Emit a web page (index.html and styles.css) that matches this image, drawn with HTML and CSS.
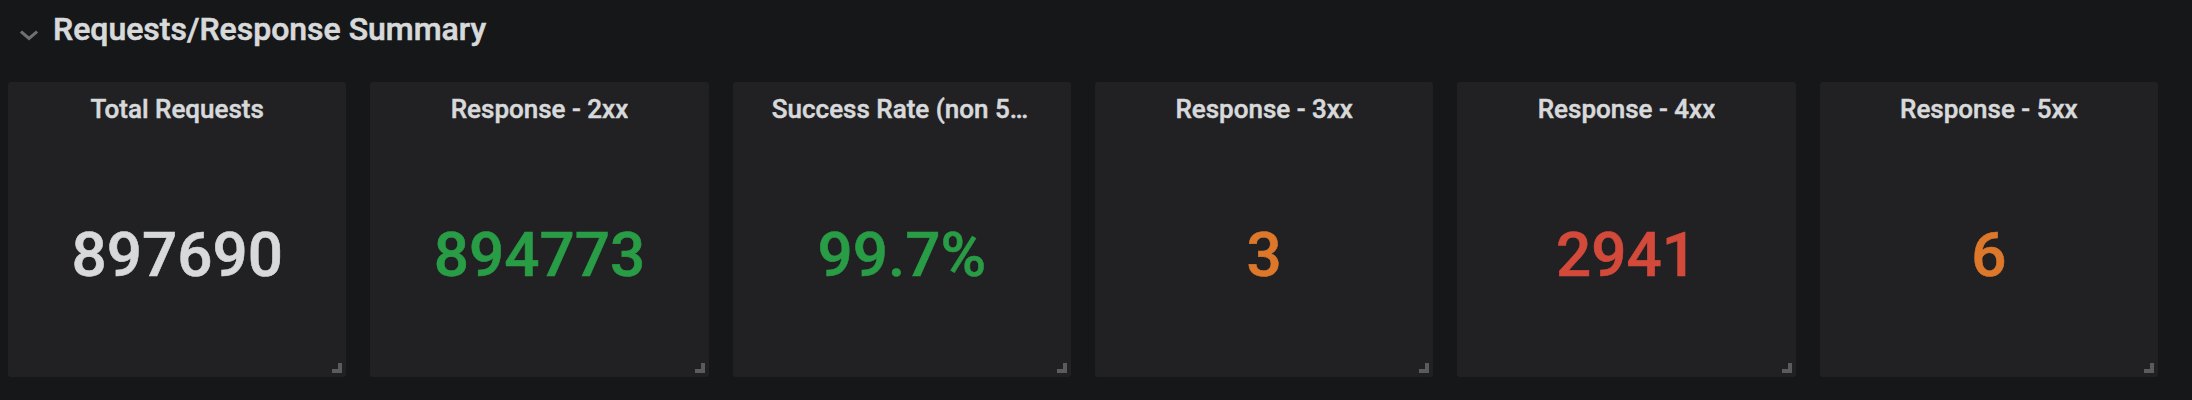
FILE: index.html
```html
<!DOCTYPE html>
<html lang="en">
<head>
<meta charset="utf-8">
<title>Requests/Response Summary</title>
<link rel="stylesheet" href="styles.css">
</head>
<body>
<div class="dashboard">
  <div class="row-header">
    <svg class="chevron" width="18" height="11" viewBox="0 0 18 11" aria-hidden="true">
      <path d="M2 2.5 L9 8.5 L16 2.5" fill="none" stroke="#6f7073" stroke-width="3" stroke-linecap="square"/>
    </svg>
    <span class="row-title">Requests/Response Summary</span>
  </div>
  <div class="panels">
    <div class="panel">
      <div class="panel-title"><span class="panel-title-text">Total Requests</span></div>
      <div class="panel-value value-neutral">897690</div>
      <span class="resize-handle"></span>
    </div>
    <div class="panel">
      <div class="panel-title"><span class="panel-title-text">Response - 2xx</span></div>
      <div class="panel-value value-ok">894773</div>
      <span class="resize-handle"></span>
    </div>
    <div class="panel">
      <div class="panel-title"><span class="panel-title-text">Success Rate (non 5xx)</span></div>
      <div class="panel-value value-ok">99.7%</div>
      <span class="resize-handle"></span>
    </div>
    <div class="panel">
      <div class="panel-title"><span class="panel-title-text">Response - 3xx</span></div>
      <div class="panel-value value-warn">3</div>
      <span class="resize-handle"></span>
    </div>
    <div class="panel">
      <div class="panel-title"><span class="panel-title-text">Response - 4xx</span></div>
      <div class="panel-value value-crit">2941</div>
      <span class="resize-handle"></span>
    </div>
    <div class="panel">
      <div class="panel-title"><span class="panel-title-text">Response - 5xx</span></div>
      <div class="panel-value value-warn">6</div>
      <span class="resize-handle"></span>
    </div>
  </div>
</div>
</body>
</html>
```
FILE: styles.css
```css
html, body {
  margin: 0;
  padding: 0;
  background: #161719;
  height: 100%;
}
body {
  font-family: Roboto, "Liberation Sans", sans-serif;
  color: #d8d9da;
}
.dashboard {
  display: flex;
  flex-direction: column;
}
.row-header {
  display: flex;
  align-items: center;
  gap: 15px;
  height: 58px;
  padding: 0 0 0 20px;
  box-sizing: border-box;
}
.chevron {
  display: block;
  margin-top: 12px;
}
.row-title {
  font-size: 32px;
  font-weight: 500;
  color: #d8d9da;
  line-height: 1;
  -webkit-text-stroke: 0.6px currentColor;
}
.panels {
  display: grid;
  grid-template-columns: repeat(6, 1fr);
  gap: 24px;
  padding: 24px 34px 0 8px;
}
.panel {
  position: relative;
  background: #212124;
  border-radius: 3px;
  height: 295px;
  display: flex;
  flex-direction: column;
}
.panel-title {
  height: 50px;
  display: flex;
  justify-content: center;
  align-items: center;
  padding-top: 4px;
  box-sizing: border-box;
}
.panel-title-text {
  font-size: 26px;
  font-weight: 500;
  color: #d8d9da;
  white-space: nowrap;
  overflow: hidden;
  text-overflow: ellipsis;
  max-width: 260px;
  line-height: 30px;
  -webkit-text-stroke: 0.5px currentColor;
}
.panel-value {
  flex: 1;
  display: flex;
  align-items: center;
  justify-content: center;
  font-size: 62px;
  font-weight: 500;
  line-height: 1;
  -webkit-text-stroke: 0.6px currentColor;
}
.value-neutral { color: #d8d9da; }
.value-ok { color: #299c46; }
.value-warn { color: #dd782b; }
.value-crit { color: #d44a3a; }
.resize-handle {
  position: absolute;
  right: 4px;
  bottom: 4px;
  width: 10px;
  height: 10px;
  background:
    linear-gradient(#5b5b5f, #5b5b5f) right top / 4px 10px no-repeat,
    linear-gradient(#5b5b5f, #5b5b5f) left bottom / 10px 4px no-repeat;
}
```
